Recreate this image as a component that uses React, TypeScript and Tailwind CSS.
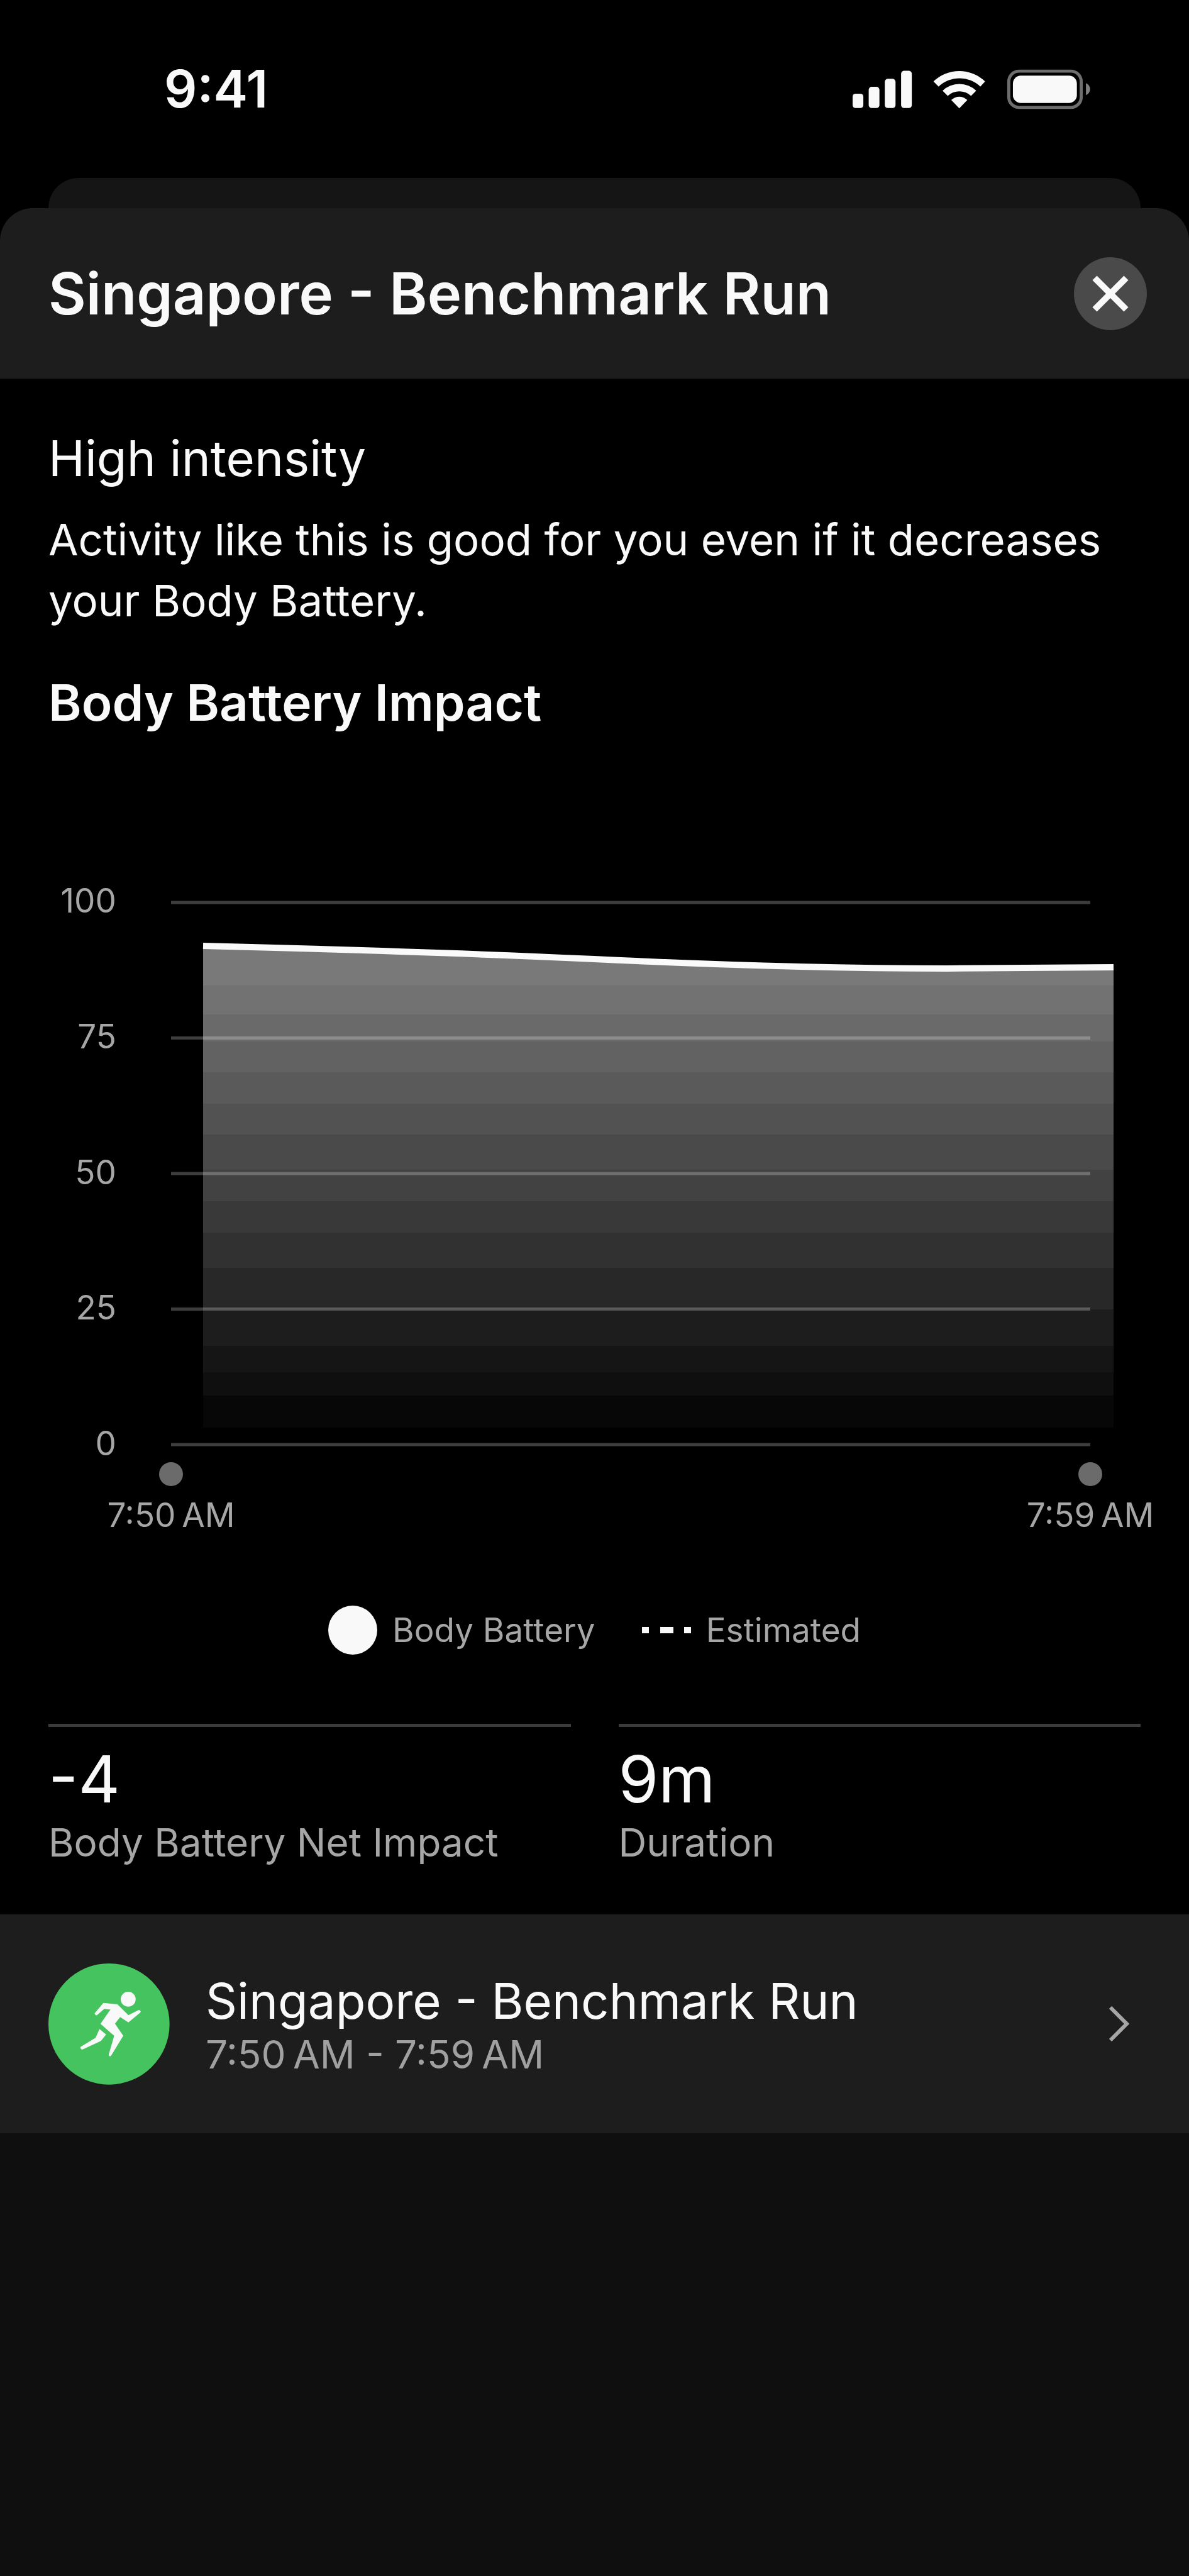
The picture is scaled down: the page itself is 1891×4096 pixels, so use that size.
import type { ReactNode } from 'react';

const GRID_VALUES = [100, 75, 50, 25, 0];
const GRID_TOP = 33;
const GRID_STEP = 215.5;

// [start y, fill] for every shade step of the area, top to bottom
const BANDS: [number, string][] = [
  [90, '#797979'],
  [165, '#727272'],
  [211, '#6a6a6a'],
  [254, '#626262'],
  [303, '#5a5a5a'],
  [353, '#525252'],
  [402, '#4a4a4a'],
  [458, '#424242'],
  [508, '#393939'],
  [558, '#313131'],
  [614, '#282828'],
  [680, '#1d1d1d'],
  [738, '#151515'],
  [780, '#0f0f0f'],
  [817, '#070707'],
  [868, '#000000'],
];

const LINE = 'M51 102 C290 108 500 115 673 123 C860 132 1050 138 1234 138 C1330 138 1420 136 1499 136';

function StatusBar() {
  return (
    <div className="flex h-[283px] items-center justify-between pl-[261px] pr-[157px]">
      <span className="text-[82px] leading-[96px] font-semibold">9:41</span>
      <svg className="h-[64px] w-[378px]" viewBox="111 91 1152 192" fill="#f9f9f9" aria-hidden="true">
        <rect x="111" y="208" width="52" height="70" rx="15" />
        <rect x="189" y="175" width="52" height="103" rx="15" />
        <rect x="267" y="136" width="52" height="142" rx="15" />
        <rect x="346" y="97" width="52" height="181" rx="15" />
        <path d="M503 149 A180 180 0 0 1 753 149 L730 174 A146 146 0 0 0 528 174 Z" />
        <path d="M547 194 A118 118 0 0 1 710 194 L685 219 A83 83 0 0 0 572 219 Z" />
        <path d="M589 239 A56 56 0 0 1 667 239 L628 279 Z" />
        <rect x="868" y="99" width="351" height="176" rx="50" fill="none" stroke="#6e6e6e" strokeWidth="15" />
        <rect x="888" y="121" width="310" height="132" rx="38" />
        <path d="M1242 157 C1255 163 1262 174 1262 186 C1262 198 1255 209 1242 215 Z" fill="#808080" />
      </svg>
    </div>
  );
}

function BatteryChart() {
  return (
    <div className="mt-[237px]">
      <div className="flex pl-[77px] pr-[120px]">
        <div className="flex w-[195px] flex-col justify-between pr-[87px] text-right text-[53px] leading-[60px] text-[#a6a6a6]">
          {GRID_VALUES.map(v => <span key={v}>{v}</span>)}
        </div>
        <svg className="h-[923px] min-w-0 flex-1" viewBox="0 0 1499 923" preserveAspectRatio="none" role="img" aria-label="Body Battery from 92 to 88">
          <defs>
            <clipPath id="area">
              <path d={`${LINE} V897 H51 Z`} />
            </clipPath>
          </defs>
          <g clipPath="url(#area)">
            {BANDS.map(([y, fill]) => (
              <rect key={y} x="51" y={y} width="1448" height={923 - y} fill={fill} />
            ))}
          </g>
          {GRID_VALUES.map((v, i) => (
            <rect key={v} x="0" y={GRID_TOP - 2.5 + i * GRID_STEP} width="1462" height="5" fill="#ffffff" fillOpacity="0.24" />
          ))}
          <path d={LINE} fill="none" stroke="#fafafa" strokeWidth="10" />
        </svg>
      </div>

      {/* Time axis */}
      <div className="flex justify-between pl-[172px] pr-[57px]">
        {['7:50\u202fAM', '7:59\u202fAM'].map(t => (
          <div key={t} className="flex w-[200px] flex-col items-center">
            <span className="size-[38px] rounded-full bg-[#6b6b6b]" />
            <span className="mt-4 text-[53px] leading-[60px] whitespace-nowrap text-[#a6a6a6]">{t}</span>
          </div>
        ))}
      </div>

      {/* Legend */}
      <div className="mt-[114px] flex items-center justify-center gap-[74px] text-[53px] leading-[60px] text-[#a6a6a6]">
        <div className="flex items-center gap-6">
          <span className="size-[78px] rounded-full bg-[#f9f9f9]" />
          Body Battery
        </div>
        <div className="flex items-center gap-6">
          <svg className="h-[10px] w-[78px]" viewBox="0 0 78 10" fill="#f9f9f9" aria-hidden="true">
            <rect width="11" height="10" />
            <rect x="29" width="21" height="10" />
            <rect x="67" width="11" height="10" />
          </svg>
          Estimated
        </div>
      </div>
    </div>
  );
}

function Stat({ value, label }: { value: string; label: ReactNode }) {
  return (
    <div className="border-t-[5px] border-[#3c3c3c] pt-[27px]">
      <div className="text-[103px] leading-[112px]">{value}</div>
      <div className="mt-[7px] text-[62px] leading-[76px] text-[#a6a6a6]">{label}</div>
    </div>
  );
}

function RunnerIcon() {
  return (
    <svg className="size-[193px] shrink-0" viewBox="55 120 587 587" aria-hidden="true">
      <circle cx="348" cy="413" r="293" fill="#45c35f" />
      <g fill="#f9f9f9">
        <circle cx="441" cy="293" r="36" />
        <path d="M321 311 L389 318 L442 370 L490 346 Q497 343 502 353 L499 358 L442 405 L402 379 L377 411 L417 470 L358 566 Q352 573 346 563 L373 470 L307 412 L355 343 L325 340 L290 370 Q283 373 278 362 Z" />
        <path d="M302 437 L334 464 L309 495 L219 537 Q209 534 210 524 L283 480 Z" />
      </g>
    </svg>
  );
}

export default function App() {
  return (
    <div className="flex min-h-screen flex-col bg-black font-['Inter',sans-serif] text-[#f9f9f9]">
      <StatusBar />

      <div className="mx-[77px] h-[48px] rounded-t-[48px] bg-[#151515]" />

      <main className="flex flex-1 flex-col">
        <header className="flex h-[271px] items-center justify-between rounded-t-[52px] bg-[#1d1d1d] pl-[77px] pr-[67px]">
          <h1 className="text-[92px] leading-[112px] font-semibold">Singapore - Benchmark Run</h1>
          <button type="button" aria-label="Close" className="flex size-[116px] items-center justify-center rounded-full bg-[#4a4a4a]">
            <svg className="size-[58px]" viewBox="0 0 58 58" stroke="#f9f9f9" strokeWidth="10" aria-hidden="true">
              <path d="M4 4 L54 54 M54 4 L4 54" />
            </svg>
          </button>
        </header>

        <section className="px-[77px] pt-[79px]">
          <h2 className="text-[78px] leading-[96px]">High intensity</h2>
          <p className="mt-[33px] text-[69px] leading-[97px]">
            Activity like this is good for you even if it decreases your Body Battery.
          </p>
          <h2 className="mt-[65px] text-[80px] leading-[96px] font-semibold">Body Battery Impact</h2>
        </section>

        <BatteryChart />

        <div className="mt-[110px] grid grid-cols-2 gap-[76px] px-[77px] pb-[76px]">
          <Stat value="-4" label="Body Battery Net Impact" />
          <Stat value="9m" label="Duration" />
        </div>

        <a href="#activity" className="flex h-[348px] items-center bg-[#1d1d1d] pl-[77px] pr-[94px]">
          <RunnerIcon />
          <div className="ml-[57px] flex-1">
            <div className="text-[78px] leading-[84px]">Singapore - Benchmark Run</div>
            <div className="mt-[13px] text-[62px] leading-[60px] text-[#a0a0a0]">{'7:50\u202fAM - 7:59\u202fAM'}</div>
          </div>
          <svg className="h-[56px] w-[34px]" viewBox="0 0 34 56" fill="none" stroke="#a6a6a6" strokeWidth="6" aria-hidden="true">
            <path d="M3 2 L29 28 L3 54" />
          </svg>
        </a>

        <div className="flex-1 bg-[#0f0f0f]" />
      </main>
    </div>
  );
}
